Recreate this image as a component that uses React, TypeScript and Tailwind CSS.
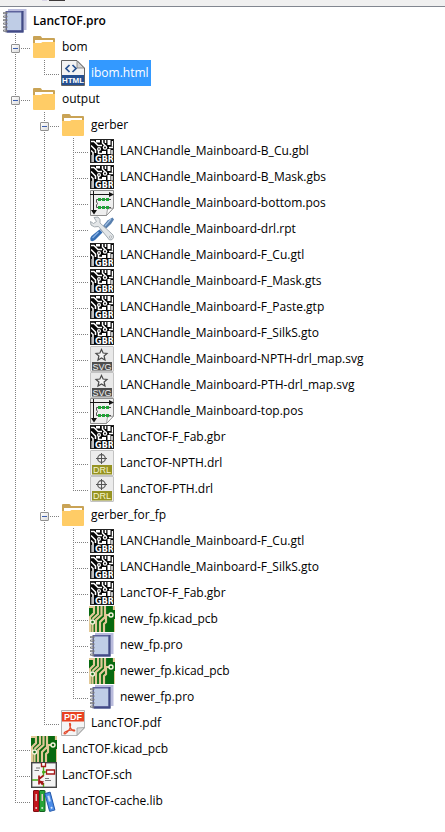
import { useState } from "react";
import type { ReactNode } from "react";

type Kind = "pro" | "folder" | "html" | "gbr" | "pos" | "rpt" | "svg" | "drl" | "pcb" | "pdf" | "sch" | "lib";

interface FileNode {
  name: string;
  kind: Kind;
  children?: FileNode[];
}

const file = (name: string, kind: Kind): FileNode => ({ name, kind });

const project: FileNode = {
  name: "LancTOF.pro",
  kind: "pro",
  children: [
    { name: "bom", kind: "folder", children: [file("ibom.html", "html")] },
    {
      name: "output",
      kind: "folder",
      children: [
        {
          name: "gerber",
          kind: "folder",
          children: [
            file("LANCHandle_Mainboard-B_Cu.gbl", "gbr"),
            file("LANCHandle_Mainboard-B_Mask.gbs", "gbr"),
            file("LANCHandle_Mainboard-bottom.pos", "pos"),
            file("LANCHandle_Mainboard-drl.rpt", "rpt"),
            file("LANCHandle_Mainboard-F_Cu.gtl", "gbr"),
            file("LANCHandle_Mainboard-F_Mask.gts", "gbr"),
            file("LANCHandle_Mainboard-F_Paste.gtp", "gbr"),
            file("LANCHandle_Mainboard-F_SilkS.gto", "gbr"),
            file("LANCHandle_Mainboard-NPTH-drl_map.svg", "svg"),
            file("LANCHandle_Mainboard-PTH-drl_map.svg", "svg"),
            file("LANCHandle_Mainboard-top.pos", "pos"),
            file("LancTOF-F_Fab.gbr", "gbr"),
            file("LancTOF-NPTH.drl", "drl"),
            file("LancTOF-PTH.drl", "drl"),
          ],
        },
        {
          name: "gerber_for_fp",
          kind: "folder",
          children: [
            file("LANCHandle_Mainboard-F_Cu.gtl", "gbr"),
            file("LANCHandle_Mainboard-F_SilkS.gto", "gbr"),
            file("LancTOF-F_Fab.gbr", "gbr"),
            file("new_fp.kicad_pcb", "pcb"),
            file("new_fp.pro", "pro"),
            file("newer_fp.kicad_pcb", "pcb"),
            file("newer_fp.pro", "pro"),
          ],
        },
        file("LancTOF.pdf", "pdf"),
      ],
    },
    file("LancTOF.kicad_pcb", "pcb"),
    file("LancTOF.sch", "sch"),
    file("LancTOF-cache.lib", "lib"),
  ],
};

const iconText = "font-['Liberation_Sans',Arial,sans-serif]";

const drawings: Record<Kind, ReactNode> = {
  pro: (
    <>
      <path d="M6 1H24.500V22H22V3.500H6Z" fill="#b9bbdc" />
      <rect x="3.500" y="3" width="18" height="21.500" fill="#5d639c" />
      <rect x="5" y="4.500" width="14.500" height="17.500" fill="#bfcde6" />
      <path d="M19.500 3H21.500V24.500H5V23H19.500Z" fill="#414a85" />
      {[4, 7.5, 11, 14.5, 18, 21.5].map((y) => (
        <g key={y}>
          <rect x="1" y={y} width="4.500" height="2.200" rx="1" fill="#77787c" />
          <rect x="2" y={y + 0.5} width="1.500" height="1" fill="#bcbcc0" />
        </g>
      ))}
    </>
  ),
  folder: (
    <>
      <path d="M2 3Q2 2 3 2H9Q10 2 10.500 3L11 4H23Q24 4 24 5V12H2Z" fill="#c9a355" />
      <path d="M4 6H22V12H4Z" fill="#fff" />
      <path d="M2 9H10L11.500 8H24V23Q24 24 23 24H3Q2 24 2 23Z" fill="#ffcc66" />
    </>
  ),
  html: (
    <>
      <path d="M1.500 .5H17L24.500 8V25.500H1.500Z" fill="#f3f3f3" stroke="#626262" />
      <path d="M17 1V8H24Z" fill="#d5d5d5" stroke="#777" strokeWidth=".8" />
      <path d="M9.500 5L6 8.500L9.500 12M12.500 5L16 8.500L12.500 12" fill="none" stroke="#27518f" strokeWidth="1.700" />
      <rect x="2" y="15" width="22" height="10" fill="#244f91" />
      <text x="13" y="23" textAnchor="middle" fill="#fff" className="font-['Liberation_Sans_Narrow','Liberation_Sans',sans-serif] text-[8px] font-bold">HTML</text>
    </>
  ),
  gbr: (
    <>
      <rect x="1" y="1" width="24" height="24" fill="#050505" />
      <path
        d="M2 3.500H5L9 7.500H13M2 7.500L6.500 12V15M2 12.500L4 14.500V25M13.500 2V5L16.500 8M13 15.500H9.500V11M16.500 2V5M23.500 3V8.500M23 12V16.500M20 9.500H24"
        fill="none"
        stroke="#fff"
        strokeWidth="1.500"
      />
      <path d="M2 17V25" stroke="#fff" />
      <g fill="#fff">
        <rect x="7" y="2" width="4" height="2.500" />
        <circle cx="10" cy="11" r="2" />
        <circle cx="16" cy="9.500" r="2.200" />
        <rect x="18.500" y="2" width="3" height="5" />
        <rect x="18.500" y="11" width="3" height="5" />
        <rect x="13" y="13" width="4" height="3" />
      </g>
      <circle cx="16" cy="9.500" r=".9" />
      <circle cx="10" cy="11" r=".8" />
      <path d="M5.500 25V18.500L7 17H25V25Z" fill="#050505" />
      <text x="15.500" y="24" textAnchor="middle" fill="#fff" className="font-['DejaVu_Sans',sans-serif] text-[8px] font-bold">GBR</text>
      <rect x="1.500" y="1.500" width="23" height="23" fill="none" stroke="#222" />
    </>
  ),
  pos: (
    <>
      <path d="M1.500 .5H24.500V18L17.500 25.500H1.500Z" fill="#efefef" stroke="#8f8f8f" />
      <path d="M24.500 18L17.500 25.500L18.500 19Z" fill="#fff" stroke="#8a8a8a" strokeWidth=".8" />
      <path d="M1 4.500H21M4.500 1V21" stroke="#161616" />
      <path d="M20 2L25 4.500L20 7ZM2 20H8L5 24.500Z" fill="#111" />
      <path d="M22 9.500H7.500V12Q9.500 13.500 7.500 15V17.500H22" fill="none" stroke="#555" />
      <g fill="#1fa336">
        {[9, 13, 17].map((x) => (
          <g key={x}>
            <rect x={x} y="8" width="3" height="3" />
            <rect x={x} y="16" width="3" height="3" />
          </g>
        ))}
      </g>
    </>
  ),
  rpt: (
    <>
      <path d="M23.500 1.500L25 3.500L22 8L13.500 16L11 13.500L18.500 4.500Z" fill="#587fae" />
      <path d="M22 3L16 10" stroke="#9cbbe0" strokeWidth="1.200" />
      <path d="M5 1.500L9 1Q12 3 11 7L22 17Q25 19 24.500 21.500Q23.500 24.500 20.500 24L9.500 10.500Q5 12 2 9L1.500 5.500L4.500 7.500L7.500 5.500Z" fill="#e3e6e8" stroke="#9ba4aa" strokeWidth=".9" />
      <circle cx="21.500" cy="21" r="1.100" fill="#fff" stroke="#8a9299" strokeWidth=".6" />
      <path d="M10.500 13.500L13.500 16.500L6 24Q3.500 26 1.500 24.500Q.5 22 2.500 20Z" fill="#356db2" />
      <path d="M9.500 16L3.500 22" stroke="#83aee2" strokeWidth="1.500" />
    </>
  ),
  svg: (
    <>
      <rect x="1.500" y=".5" width="23" height="25" rx=".5" fill="#e9e9e9" stroke="#c3c3c3" />
      <path d="M12.500 3.500L14.100 7L18 7.400L15.100 10L16 14L12.500 11.900L9 14L9.900 10L7 7.400L10.900 7Z" fill="#f6f6f6" stroke="#4a4a4a" strokeWidth="1.200" />
      <rect x="3" y="16" width="20" height="8.500" fill="#4e4e4e" />
      <text x="13" y="23.500" textAnchor="middle" fill="#f0f0f0" className={`${iconText} text-[9px]`}>SVG</text>
    </>
  ),
  drl: (
    <>
      <rect x="1.500" y=".5" width="23" height="25" rx=".5" fill="#ececec" stroke="#c3c3c3" />
      <circle cx="12.500" cy="8.500" r="3.800" fill="none" stroke="#555" strokeWidth="1.200" />
      <path d="M12.500 3V14M7 8.500H18" stroke="#555" />
      <rect x="3" y="15" width="20" height="9.500" fill="#969322" />
      <text x="13" y="23" textAnchor="middle" fill="#f7f5cd" className={`${iconText} text-[9px]`}>DRL</text>
    </>
  ),
  pcb: (
    <>
      <rect width="26" height="26" fill="#08690f" />
      <g fill="none" stroke="#e2c998" strokeWidth="2.200">
        <path d="M0 1H5V7L1 11V26M9 0V8L3.500 13M12.500 0V9L7 14V26M16 0V11L11 16V26M25 4V0M20 9H17V16L15 18V26" />
        <path d="M3.500 18V26" />
        <path d="M25.500 13V26" strokeWidth="1" />
      </g>
      <circle cx="3.500" cy="16" r="2" fill="#176d1a" stroke="#f6f4df" strokeWidth="1.400" />
      <circle cx="22" cy="9" r="2" fill="#176d1a" stroke="#f6f4df" strokeWidth="1.400" />
    </>
  ),
  pdf: (
    <>
      <path d="M1.500 .5H24.500V18L17 25.500H1.500Z" fill="#f5f5f5" stroke="#b3b3b3" />
      <path d="M24.500 17.500L17 25.500V18Z" fill="#dcdcdc" stroke="#999" strokeWidth=".8" />
      <rect x="2" y="2" width="22" height="9.500" fill="#e94221" />
      <text x="13" y="10" textAnchor="middle" fill="#fff" className={`${iconText} text-[9px] font-bold`}>PDF</text>
      <path d="M9.500 13.500Q11 13 10.500 16Q9.500 21 5 24Q3 24 5 22Q9 19.500 14.500 20Q15.500 21.500 13 20.800Q9.500 18 9.500 13.500Z" fill="none" stroke="#e34a2c" strokeWidth="1.100" />
    </>
  ),
  sch: (
    <>
      <rect x=".7" y=".7" width="24.600" height="24.600" fill="#f4f4f4" stroke="#444" strokeWidth="1.400" />
      <path d="M12.500 5V14M12.500 10H16M1 18H7M12.500 21V25" stroke="#49a819" strokeWidth="1.400" />
      <circle cx="12.500" cy="10" r="1.500" fill="#49a819" />
      <path d="M10.500 1V4.500H14.500V1M15.500 8H23.500V12H15.500Z" fill="#fff" stroke="#a51818" strokeWidth="1.300" />
      <path d="M8 13.500V22.500M8 17L12.500 13.500M8 19L12.500 22.500" stroke="#a51818" strokeWidth="1.700" />
      <path d="M8.500 18.500L13 19.500L10.500 23Z" fill="#a51818" />
      <path d="M5 6H9M3.500 8.500H8M14 16.500H18M14 18.500H20" stroke="#777" />
    </>
  ),
  lib: (
    <>
      <rect x="2.500" y="2.500" width="5.500" height="21" rx=".5" fill="#c3161c" stroke="#810e13" />
      <rect x="8.500" y="2.500" width="5.500" height="21" rx=".5" fill="#26a337" stroke="#13601f" />
      <g transform="rotate(-15 19 14)">
        <rect x="16.200" y="4.500" width="5.500" height="18.500" rx=".5" fill="#4c8de8" stroke="#2459ab" />
        <rect x="18" y="7.500" width="2" height="6" fill="#c8ddfa" />
        <circle cx="19" cy="20" r="1" fill="#d9e7fc" />
      </g>
      <path d="M4.500 6H6V13H4.500ZM10.500 6H12V13H10.500Z" fill="#e8c7c4" />
      <circle cx="5.200" cy="20" r="1" fill="#f0d5d3" />
      <circle cx="11.200" cy="20" r="1" fill="#d1efd4" />
    </>
  ),
};

function FileIcon({ kind }: { kind: Kind }) {
  return (
    <svg viewBox="0 0 26 26" className="size-[26px] shrink-0" aria-hidden="true">
      {drawings[kind]}
    </svg>
  );
}

const verticalDots = "bg-[repeating-linear-gradient(180deg,#808080_0_1px,transparent_1px_2px)]";
const horizontalDots = "bg-[repeating-linear-gradient(90deg,transparent_0_1px,#808080_1px_2px)]";

/* One indentation column: the trunk line and, beside the item itself, its branch. */
function Guide({ trunk, branch, children }: { trunk: "full" | "half" | "none"; branch: boolean; children?: ReactNode }) {
  const height = trunk === "full" ? "h-full" : trunk === "half" ? "h-[15px]" : "h-0";
  return (
    <span className="relative flex w-[29px] shrink-0 items-start pl-[13px]">
      <span className={`w-px ${height} ${verticalDots}`} />
      {branch && <span className={`mt-[14px] mr-px h-px flex-1 ${horizontalDots}`} />}
      {children}
    </span>
  );
}

interface RowProps {
  node: FileNode;
  trunks: boolean[];
  last: boolean;
  root?: boolean;
  selected: string;
  onSelect: (id: string) => void;
  path: string;
}

function Row({ node, trunks, last, root = false, selected, onSelect, path }: RowProps) {
  const [open, setOpen] = useState(true);
  const id = `${path}/${node.name}`;
  const active = selected === id;
  const below = root ? [] : [...trunks, !last];
  return (
    <li role="treeitem" aria-expanded={node.children ? open : undefined} aria-selected={active}>
      <div className="flex h-[26px]">
        {trunks.map((on, i) => (
          <Guide key={i} trunk={on ? "full" : "none"} branch={false} />
        ))}
        {!root && (
          <Guide trunk={last ? "half" : "full"} branch>
            {node.children && (
              <button
                type="button"
                aria-label={`${open ? "Collapse" : "Expand"} ${node.name}`}
                onClick={() => setOpen(!open)}
                className="absolute top-[10px] left-[9px] flex size-[9px] items-center justify-center rounded-[1px] border border-[#919191] bg-linear-to-br from-white to-[#dcdcdc] ring-1 ring-white"
              >
                <span className="h-px w-[5px] bg-[#3c5fae]" />
                {!open && <span className="absolute h-[5px] w-px bg-[#3c5fae]" />}
              </button>
            )}
          </Guide>
        )}
        <FileIcon kind={node.kind} />
        <button
          type="button"
          onClick={() => onSelect(id)}
          className={`ml-[3px] px-[2px] whitespace-nowrap ${root ? "font-semibold" : ""} ${active ? "bg-[#3399ff] text-white" : ""}`}
        >
          {node.name}
        </button>
      </div>
      {node.children && open && (
        <ul role="group">
          {node.children.map((child, i) => (
            <Row
              key={child.name}
              node={child}
              trunks={below}
              last={i === node.children!.length - 1}
              selected={selected}
              onSelect={onSelect}
              path={id}
            />
          ))}
        </ul>
      )}
    </li>
  );
}

export default function App() {
  const [selected, setSelected] = useState("/LancTOF.pro/bom/ibom.html");
  return (
    <div className="min-h-screen bg-white font-['Open_Sans','Noto_Sans',sans-serif] text-[12px] leading-[16px] text-black">
      <header className="flex h-[7px] items-start gap-[2px] border-b border-[#828790] bg-[#f0f0f0] pl-[42px]">
        <span className="h-px w-[5px] bg-[#d9d5e6]" />
        <span className="h-px w-[16px] bg-[#3d3939]" />
      </header>
      <ul role="tree" aria-label="Project files" className="pt-px pl-[2px]">
        <Row node={project} trunks={[]} last root selected={selected} onSelect={setSelected} path="" />
      </ul>
    </div>
  );
}
